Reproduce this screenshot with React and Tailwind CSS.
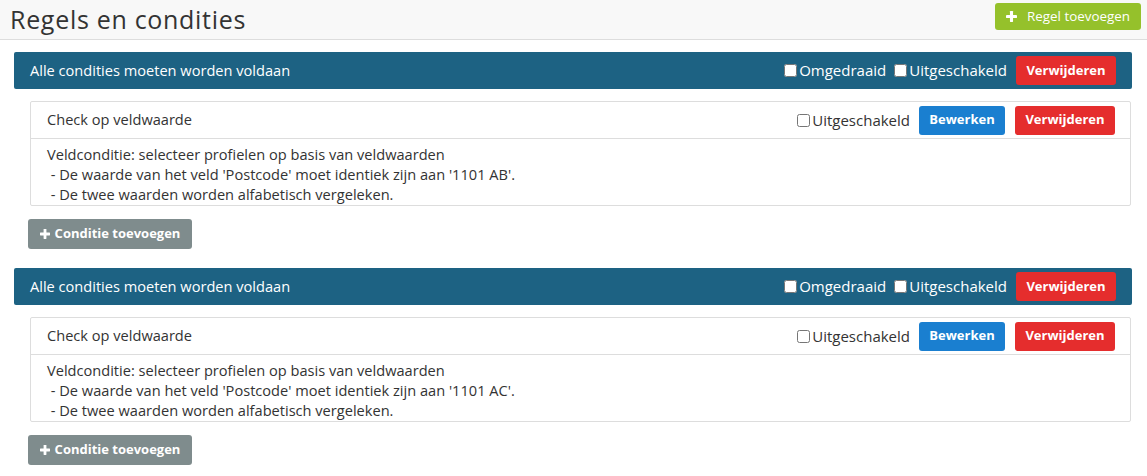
import React from 'react'

const groups = [
  { id: 1, postcode: '1101 AB' },
  { id: 2, postcode: '1101 AC' }
]

const Plus = ({ className }) => (
  <svg className={className} viewBox="0 0 10 10" fill="currentColor">
    <rect x="3.6" y="0" width="2.8" height="10" rx="0.4" />
    <rect x="0" y="3.6" width="10" height="2.8" rx="0.4" />
  </svg>
)

const Check = ({ label }) => (
  <label className="flex items-center gap-[2px]">
    <input type="checkbox" className="w-[13px] h-[13px] m-0" />
    <span>{label}</span>
  </label>
)

const RedButton = () => (
  <button className="w-[100px] h-[29px] rounded-[3px] bg-[#e52d2d] text-white text-[13px] font-bold">
    Verwijderen
  </button>
)

const Group = ({ postcode }) => (
  <div>
    {/* Rule header */}
    <div className="ml-[14px] mr-[15px] h-[37px] bg-[#1d6283] rounded-[2px] flex items-center pl-4 pr-[16px] text-white text-[14.6px]">
      <span className="flex-1">Alle condities moeten worden voldaan</span>
      <div className="flex items-center gap-[8px] text-[15px]">
        <Check label="Omgedraaid" />
        <Check label="Uitgeschakeld" />
        <div className="ml-[1px]"><RedButton /></div>
      </div>
    </div>

    {/* Condition card */}
    <div className="ml-[30px] mr-[16px] mt-[12px] border border-[#dddddd] rounded-[2px] bg-white">
      <div className="h-[37px] flex items-center pl-4 pr-[15px] border-b border-[#dddddd] text-[14.6px] text-[#333]">
        <span className="flex-1">Check op veldwaarde</span>
        <div className="flex items-center gap-[10px]">
          <div className="text-[15px] mr-[-1px]"><Check label="Uitgeschakeld" /></div>
          <button className="w-[86px] h-[29px] rounded-[3px] bg-[#1a7fd0] text-white text-[13px] font-bold">
            Bewerken
          </button>
          <RedButton />
        </div>
      </div>
      <div className="pl-4 pt-[5px] pb-[1px] text-[14.6px] leading-[20px] text-[#333]">
        <div>Veldconditie: selecteer profielen op basis van veldwaarden</div>
        <div>&nbsp;- De waarde van het veld 'Postcode' moet identiek zijn aan '{postcode}'.</div>
        <div>&nbsp;- De twee waarden worden alfabetisch vergeleken.</div>
      </div>
    </div>

    <button className="ml-[28px] mt-[13px] w-[164px] h-[30px] rounded-[3px] bg-[#7f8c8d] text-white text-[13px] font-bold flex items-center justify-center gap-[5px]">
      <Plus className="w-[10px] h-[10px]" />
      Conditie toevoegen
    </button>
  </div>
)

export default function App() {
  return (
    <div className="min-h-screen bg-white text-[#333]" style={{ fontFamily: '"Open Sans", sans-serif' }}>
      <div className="h-[40px] bg-[#f8f8f8] border-b border-[#dddddd] flex items-center justify-between pl-[10px] pr-[6px]">
        <h1 className="text-[25px] tracking-[0.7px] text-[#333] leading-none">Regels en condities</h1>
        <button className="self-start mt-[3px] w-[146px] h-[27px] rounded-[3px] bg-[#95c12b] text-white text-[13.4px] flex items-center justify-center gap-[10px]">
          <Plus className="w-[11px] h-[11px]" />
          Regel toevoegen
        </button>
      </div>
      <div className="pt-[12px] flex flex-col gap-[19px]">
        {groups.map(g => (
          <Group key={g.id} postcode={g.postcode} />
        ))}
      </div>
    </div>
  )
}
